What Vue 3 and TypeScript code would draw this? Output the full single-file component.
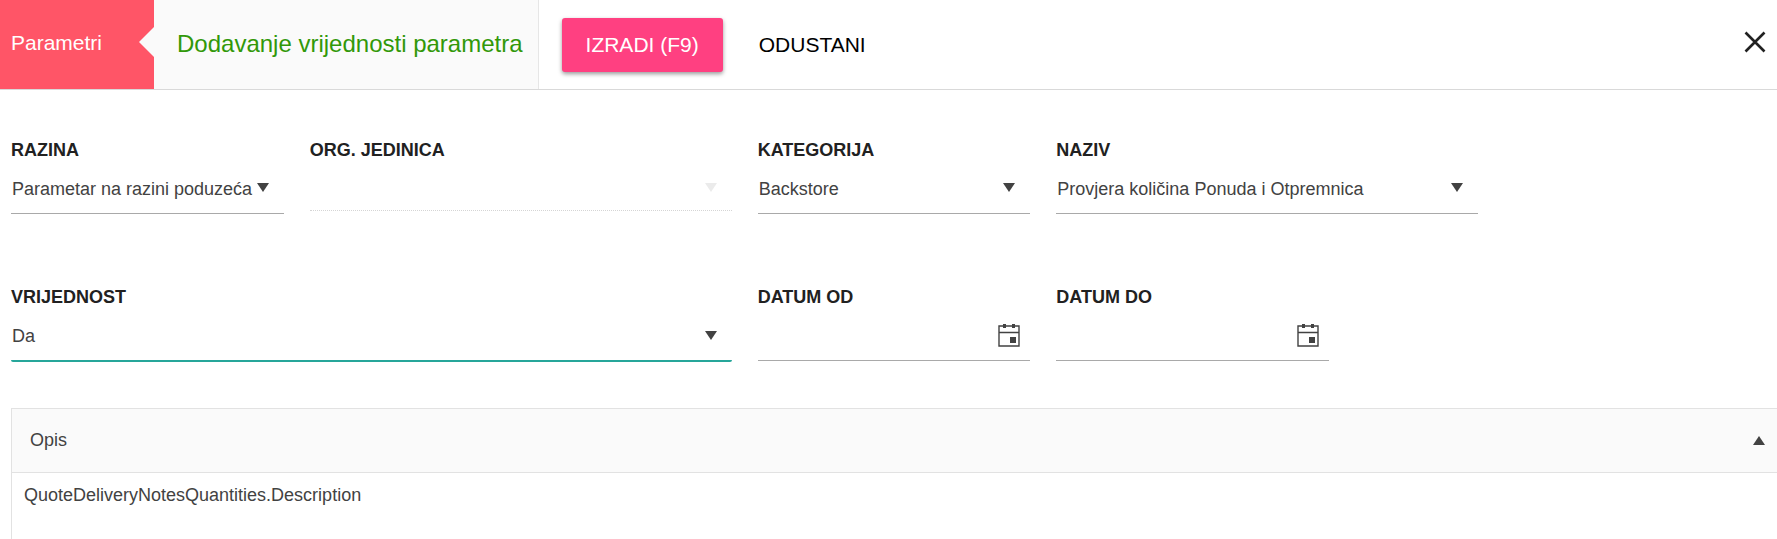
<script setup lang="ts">
import { ref } from 'vue'

interface SelectField {
  id: string
  label: string
  options: string[]
  cls: string
  disabled?: boolean
}

const fields: SelectField[] = [
  { id: 'razina', label: 'RAZINA', options: ['Parametar na razini poduzeća'], cls: 'span-2' },
  { id: 'org', label: 'ORG. JEDINICA', options: [''], cls: 'span-3', disabled: true },
  { id: 'kategorija', label: 'KATEGORIJA', options: ['Backstore'], cls: 'span-2' },
  { id: 'naziv', label: 'NAZIV', options: ['Provjera količina Ponuda i Otpremnica'], cls: 'span-3' },
  { id: 'vrijednost', label: 'VRIJEDNOST', options: ['Da', 'Ne'], cls: 'span-5 new-row active' },
]

const values = ref<Record<string, string>>(
  Object.fromEntries(fields.map((f) => [f.id, f.options[0]])),
)

const dates = ref([
  { id: 'od', label: 'DATUM OD', value: '' },
  { id: 'do', label: 'DATUM DO', value: '' },
])

const open = ref(true)
</script>

<template>
  <div class="page">
    <header class="bar">
      <a class="crumb" href="#">Parametri</a>
      <h1 class="title">Dodavanje vrijednosti parametra</h1>
      <button class="btn primary" type="button">IZRADI (F9)</button>
      <button class="btn flat" type="button">ODUSTANI</button>
      <button class="close" type="button" aria-label="Zatvori">
        <svg width="22" height="22" viewBox="0 0 22 22">
          <path d="M1.5 1.5l19 19M20.5 1.5l-19 19" stroke="#212121" stroke-width="2.6" fill="none" />
        </svg>
      </button>
    </header>

    <form class="form" @submit.prevent>
      <div v-for="f in fields" :key="f.id" class="field" :class="f.cls">
        <label :for="f.id">{{ f.label }}</label>
        <div class="control" :class="{ disabled: f.disabled }">
          <select :id="f.id" v-model="values[f.id]" :disabled="f.disabled">
            <option v-for="o in f.options" :key="o">{{ o }}</option>
          </select>
          <svg class="arrow" width="12" height="9" viewBox="0 0 12 9"><path d="M0 0h12L6 9z" fill="currentColor" /></svg>
        </div>
      </div>
      <div v-for="d in dates" :key="d.id" class="field span-2">
        <label :for="d.id">{{ d.label }}</label>
        <div class="control">
          <input :id="d.id" v-model="d.value" type="text" />
          <button class="calendar" type="button" :aria-label="d.label">
            <svg width="22" height="23" viewBox="0 0 22 23">
              <path d="M1 2h20v20H1zM1 8.5h20" stroke="currentColor" stroke-width="1.4" fill="none" />
              <path d="M5 0h3v4H5zM14 0h3v4h-3zM12 13h6v6h-6z" fill="currentColor" />
            </svg>
          </button>
        </div>
      </div>
    </form>

    <section class="panel">
      <button class="panel-head" type="button" :aria-expanded="open" @click="open = !open">
        <span>Opis</span>
        <svg width="12" height="9" viewBox="0 0 12 9"><path d="M0 9h12L6 0z" fill="currentColor" /></svg>
      </button>
      <p v-if="open" class="panel-body">QuoteDeliveryNotesQuantities.Description</p>
    </section>
  </div>
</template>

<style>
body {
  margin: 0;
  background: #fff;
}
</style>

<style scoped>
.page,
.page * {
  box-sizing: border-box;
}

.page {
  display: flex;
  flex-direction: column;
  min-height: 100vh;
  font-family: "Liberation Sans", Arial, sans-serif;
  font-size: 18px;
  color: #424242;
}

button,
select,
input {
  font: inherit;
  color: inherit;
  border: 0;
  margin: 0;
  padding: 0;
  background: none;
  outline: 0;
}

button {
  cursor: pointer;
}

svg {
  display: block;
}

.bar {
  display: flex;
  align-items: stretch;
  border-bottom: 1px solid #d9d9d9;
}

.crumb {
  position: relative;
  display: flex;
  align-items: center;
  padding: 0 52px 3px 11px;
  font-size: 21px;
  color: #fff;
  background: #ff5567;
  text-decoration: none;
}

.crumb::after {
  content: "";
  position: absolute;
  right: 0;
  top: 27px;
  border: 15px solid transparent;
  border-left: 0;
  border-right-color: #fafafa;
}

.title {
  margin: 0;
  padding: 0 15px 2px 23px;
  font-size: 24px;
  font-weight: 400;
  line-height: 87px;
  color: #319809;
  background: #fafafa;
  border-right: 1px solid #e6e6e6;
}

.btn {
  align-self: center;
  height: 54px;
  padding: 0 24px;
  font-size: 21px;
  border-radius: 3px;
}

.primary {
  margin-left: 23px;
  color: #fff;
  background: #ff4081;
  box-shadow: 0 2px 4px rgba(0, 0, 0, 0.4);
}

.flat {
  margin-left: 12px;
  color: #000;
}

.close {
  margin-left: auto;
  padding: 0 11px 5px;
}

.form {
  display: grid;
  grid-template-columns: repeat(12, minmax(0, 1fr));
  column-gap: 26px;
  row-gap: 70px;
  padding: 47px 0 46px 11px;
}

.field {
  display: flex;
  flex-direction: column;
}

.span-2 {
  grid-column-end: span 2;
}

.span-3 {
  grid-column-end: span 3;
}

.span-5 {
  grid-column-end: span 5;
}

.new-row {
  grid-column-start: 1;
}

label {
  font-weight: 700;
  line-height: 26px;
  color: #212121;
}

.control {
  position: relative;
  height: 51px;
  border-bottom: 1px solid #a9a9a9;
}

.control.disabled {
  height: 48px;
  border-bottom: 1px dotted #d5d5d5;
  color: #ebebeb;
}

.active .control {
  height: 52px;
  border-bottom: 2px solid #26a69a;
  border-radius: 2px;
}

select,
input {
  display: block;
  width: 100%;
  height: 50px;
  padding: 1px 26px 0 1px;
  border-radius: 0;
  appearance: none;
  opacity: 1;
}

.disabled select {
  height: 47px;
}

.arrow {
  position: absolute;
  right: 15px;
  top: 20px;
  pointer-events: none;
}

.active .arrow {
  top: 21px;
}

.calendar {
  position: absolute;
  right: 10px;
  top: 14px;
}

.panel {
  flex: 1;
  margin-left: 11px;
  border: 1px solid #e2e2e2;
  border-width: 1px 0 0 1px;
}

.panel-head {
  display: flex;
  align-items: center;
  justify-content: space-between;
  width: 100%;
  height: 64px;
  padding: 0 12px 0 18px;
  background: #fafafa;
  border-bottom: 1px solid #e2e2e2;
}

.panel-body {
  margin: 0;
  padding: 12px;
  line-height: 21px;
}
</style>
